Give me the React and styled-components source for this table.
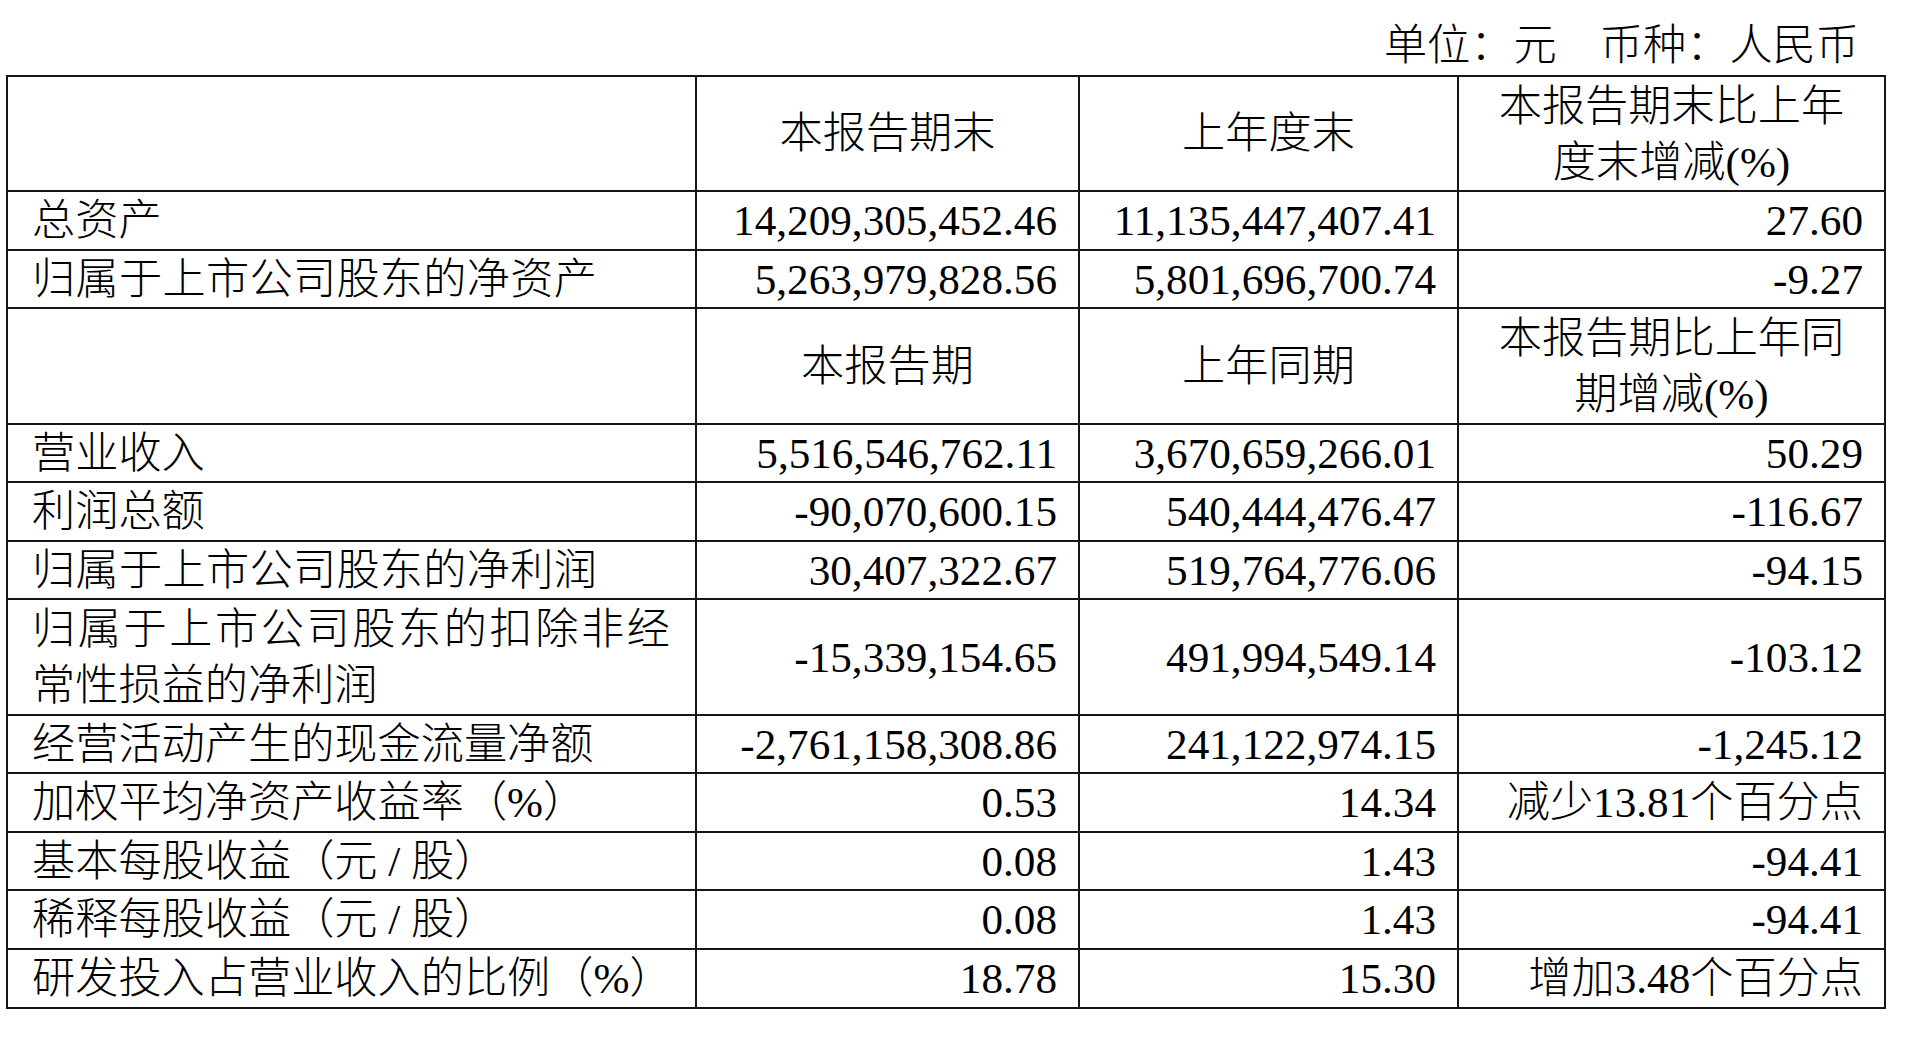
import React from "react";
import styled, { createGlobalStyle } from "styled-components";

const GlobalStyle = createGlobalStyle`
    html, body {
        margin: 0;
        padding: 0;
        background: #fff;
    }
    body {
        font-family: "Liberation Serif", "Noto Sans CJK SC", serif;
        font-weight: 300;
        color: #000;
    }
`;

const Page = styled.div`
    width: 1880px;
    padding: 17px 0 0 6px;
    font-size: 43.2px;
`;

const Caption = styled.div`
    text-align: right;
    padding-right: 27px;
    line-height: 57px;
    margin-bottom: 1px;
    white-space: pre;
`;

const Table = styled.table`
    width: 1880px;
    border-collapse: collapse;
    table-layout: fixed;
`;

const Cell = styled.td`
    border: 2px solid #161616;
    padding: 2px 21px 0 24px;
    line-height: 54.6px;
    vertical-align: middle;
    white-space: nowrap;
    text-align: ${(p) => p.$align || "right"};
`;

const HeadCell = styled(Cell)`
    text-align: center;
    padding: 2px 8px 0;
`;

const Line = styled.span`
    display: block;
    line-height: 55.6px;
`;

// 被两端对齐撑开的标签行，宽度取自原表
const Spread = styled(Line)`
    width: ${(p) => p.$width}px;
    line-height: ${(p) => (p.$single ? "54.6px" : "55.6px")};
    text-align: justify;
    text-align-last: justify;
`;

const headers = [
    ["本报告期末", "上年度末", ["本报告期末比上年", "度末增减(%)"]],
    ["本报告期", "上年同期", ["本报告期比上年同", "期增减(%)"]],
];

const balance = [
    { label: "总资产", values: ["14,209,305,452.46", "11,135,447,407.41", "27.60"] },
    { label: "归属于上市公司股东的净资产", spread: 565, values: ["5,263,979,828.56", "5,801,696,700.74", "-9.27"] },
];

const income = [
    { label: "营业收入", values: ["5,516,546,762.11", "3,670,659,266.01", "50.29"] },
    { label: "利润总额", values: ["-90,070,600.15", "540,444,476.47", "-116.67"] },
    { label: "归属于上市公司股东的净利润", spread: 565, values: ["30,407,322.67", "519,764,776.06", "-94.15"] },
    {
        label: ["归属于上市公司股东的扣除非经", "常性损益的净利润"],
        values: ["-15,339,154.65", "491,994,549.14", "-103.12"],
    },
    { label: "经营活动产生的现金流量净额", values: ["-2,761,158,308.86", "241,122,974.15", "-1,245.12"] },
    { label: "加权平均净资产收益率（%）", values: ["0.53", "14.34", "减少13.81个百分点"] },
    { label: "基本每股收益（元 / 股）", values: ["0.08", "1.43", "-94.41"] },
    { label: "稀释每股收益（元 / 股）", values: ["0.08", "1.43", "-94.41"] },
    { label: "研发投入占营业收入的比例（%）", values: ["18.78", "15.30", "增加3.48个百分点"] },
];

const HeaderRow = ({ titles }) => (
    <tr>
        <HeadCell />
        {titles.map((t, i) =>
            Array.isArray(t) ? (
                <HeadCell key={i}>
                    {t.map((l) => <Line key={l}>{l}</Line>)}
                </HeadCell>
            ) : (
                <HeadCell key={i}>{t}</HeadCell>
            )
        )}
    </tr>
);

const Label = ({ row }) => {
    if (Array.isArray(row.label)) {
        return (
            <Cell $align="left">
                <Spread $width={638}>{row.label[0]}</Spread>
                <Line>{row.label[1]}</Line>
            </Cell>
        );
    }
    return (
        <Cell $align="left">
            {row.spread ? <Spread $single $width={row.spread}>{row.label}</Spread> : row.label}
        </Cell>
    );
};

const DataRow = ({ row }) => (
    <tr>
        <Label row={row} />
        {row.values.map((v, i) => <Cell key={i}>{v}</Cell>)}
    </tr>
);

export default function App() {
    return (
        <Page>
            <GlobalStyle />
            <Caption>{"单位：元　币种：人民币"}</Caption>
            <Table>
                <colgroup>
                    <col style={{ width: 689 }} />
                    <col style={{ width: 383 }} />
                    <col style={{ width: 379 }} />
                    <col style={{ width: 427 }} />
                </colgroup>
                <tbody>
                    <HeaderRow titles={headers[0]} />
                    {balance.map((r) => <DataRow key={r.label} row={r} />)}
                    <HeaderRow titles={headers[1]} />
                    {income.map((r) => <DataRow key={String(r.label)} row={r} />)}
                </tbody>
            </Table>
        </Page>
    );
}
